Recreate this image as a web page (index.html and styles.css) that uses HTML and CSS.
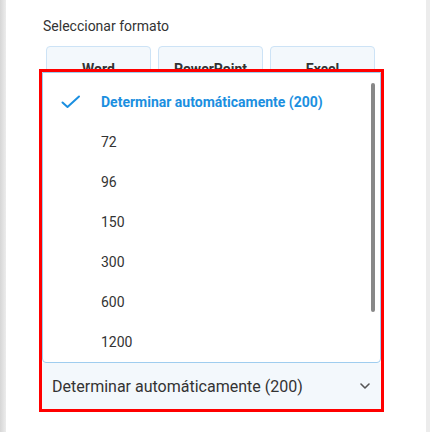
FILE: index.html
```html
<!DOCTYPE html>
<html lang="es">
<head>
<meta charset="utf-8">
<link rel="stylesheet" href="styles.css">
</head>
<body>
<div class="panel">
  <div class="title">Seleccionar formato</div>
  <div class="formats">
    <div class="fmt">Word</div>
    <div class="fmt">PowerPoint</div>
    <div class="fmt">Excel</div>
  </div>
  <div class="field">
    <div class="menu">
      <div class="item selected">
        <svg class="check" width="20" height="14" viewBox="0 0 20 14"><path d="M1.5 7.5 L6.5 12 L18 1.5" fill="none" stroke="#1b8fe0" stroke-width="2" stroke-linecap="round" stroke-linejoin="round"/></svg>
        <span>Determinar automáticamente (200)</span>
      </div>
      <div class="item"><span>72</span></div>
      <div class="item"><span>96</span></div>
      <div class="item"><span>150</span></div>
      <div class="item"><span>300</span></div>
      <div class="item"><span>600</span></div>
      <div class="item"><span>1200</span></div>
      <div class="scrollbar"></div>
    </div>
    <div class="select">
      <span>Determinar automáticamente (200)</span>
      <svg class="chev" width="10" height="6" viewBox="0 0 10 6"><path d="M1 1 L5 5 L9 1" fill="none" stroke="#555" stroke-width="1.6" stroke-linecap="round" stroke-linejoin="round"/></svg>
    </div>
    <div class="highlight"></div>
  </div>
</div>
</body>
</html>
```
FILE: styles.css
```css
html, body {
  margin: 0;
  padding: 0;
  height: 432px;
  overflow: hidden;
}
body {
  background: linear-gradient(to right, #d6d6d6 0, #ececec 6px, #ececec 100%);
  font-family: Roboto, "Liberation Sans", sans-serif;
}
.panel {
  margin-left: 6px;
  width: 420px;
  height: 432px;
  background: #fff;
  box-sizing: border-box;
  padding: 16px 0 0 36px;
}
.title {
  font-size: 14px;
  line-height: 20px;
  color: #333;
  padding-left: 1px;
}
.formats {
  display: flex;
  gap: 7px;
  margin: 10px 0 0 4px;
  height: 48px;
}
.fmt {
  width: 105px;
  box-sizing: border-box;
  border: 1px solid #cde3f6;
  border-radius: 4px;
  background: #f3f8fc;
  font-size: 14px;
  font-weight: 700;
  color: #333;
  text-align: center;
  padding-top: 14px;
}
.field {
  position: relative;
  width: 339px;
  margin-top: 269px;
}
.select {
  height: 46px;
  background: #f3f8fc;
  display: flex;
  align-items: center;
  justify-content: space-between;
  padding: 0 11px 0 10px;
  font-size: 16px;
  color: #333;
}
.chev { display: block; }
.menu {
  position: absolute;
  left: 0;
  right: 0;
  bottom: 100%;
  height: 291px;
  box-sizing: border-box;
  padding-top: 9px;
  background: #fff;
  border: 1px solid #9fcdef;
  border-radius: 0 0 4px 4px;
}
.item {
  height: 40px;
  display: flex;
  align-items: center;
  padding-left: 58px;
  position: relative;
  font-size: 14px;
  color: #333;
}
.item.selected {
  color: #1b8fe0;
  font-weight: 700;
}
.check {
  position: absolute;
  left: 18px;
  top: 13px;
}
.scrollbar {
  position: absolute;
  right: 5px;
  top: 10px;
  width: 4px;
  height: 229px;
  border-radius: 2px;
  background: #888;
}
.highlight {
  position: absolute;
  left: -3px;
  right: -3px;
  top: -294px;
  bottom: -3px;
  border: 3px solid #f00;
  pointer-events: none;
}
```
